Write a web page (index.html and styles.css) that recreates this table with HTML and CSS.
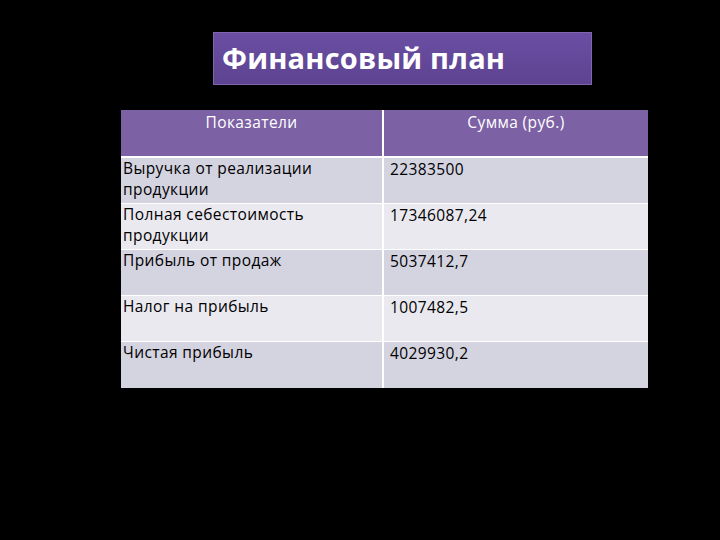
FILE: index.html
```html
<!DOCTYPE html>
<html lang="ru">
<head>
<meta charset="utf-8">
<link rel="stylesheet" href="styles.css">
</head>
<body>
<div class="slide">
  <div class="title-wrap">
    <div class="title">Финансовый план</div>
  </div>
  <table class="fin">
    <thead>
      <tr><th>Показатели</th><th>Сумма (руб.)</th></tr>
    </thead>
    <tbody>
      <tr class="odd"><td>Выручка от реализации продукции</td><td>22383500</td></tr>
      <tr class="even"><td>Полная себестоимость продукции</td><td>17346087,24</td></tr>
      <tr class="odd"><td>Прибыль от продаж</td><td>5037412,7</td></tr>
      <tr class="even"><td>Налог на прибыль</td><td>1007482,5</td></tr>
      <tr class="odd"><td>Чистая прибыль</td><td>4029930,2</td></tr>
    </tbody>
  </table>
</div>
</body>
</html>
```
FILE: styles.css
```css
html, body {
  margin: 0;
  padding: 0;
  background: #000;
}
.slide {
  width: 720px;
  height: 540px;
  background: #000;
  padding-top: 32px;
  box-sizing: border-box;
  font-family: "Open Sans", "Liberation Sans", sans-serif;
}
.title-wrap {
  margin-left: 213px;
  width: 379px;
  height: 53px;
  box-sizing: border-box;
  background: linear-gradient(#6b4ea3, #5d4391);
  border: 1px solid #7e66ad;
  display: flex;
  align-items: center;
  padding-left: 8px;
}
.title {
  color: #fff;
  font-weight: bold;
  font-size: 29px;
  letter-spacing: 0.2px;
  line-height: 1;
  margin-top: -2px;
}
.fin {
  margin-left: 121px;
  margin-top: 25px;
  width: 527px;
  border-collapse: collapse;
  table-layout: fixed;
}
.fin th, .fin td {
  padding: 0;
  vertical-align: top;
  font-size: 15.5px;
  letter-spacing: 0.4px;
  line-height: 21px;
  text-align: left;
}
.fin th {
  background: #7d61a5;
  color: #fff;
  font-weight: normal;
  text-align: center;
  height: 47px;
  padding-top: 2px;
  border-bottom: 2px solid #fff;
  box-sizing: border-box;
}
.fin th:first-child { width: 262px; border-right: 2px solid #fff; }
.fin td {
  color: #000;
  height: 46px;
  box-sizing: border-box;
  padding: 0 4px 0 2px;
  border-bottom: 1px solid #fff;
}
.fin td:first-child { border-right: 2px solid #fff; }
.fin td:last-child { padding-left: 6px; padding-top: 1px; }
.fin tr.odd td { background: #d4d3e0; }
.fin tr.even td { background: #eae9f0; }
.fin tr:last-child td { border-bottom: none; height: 47px; }
```
